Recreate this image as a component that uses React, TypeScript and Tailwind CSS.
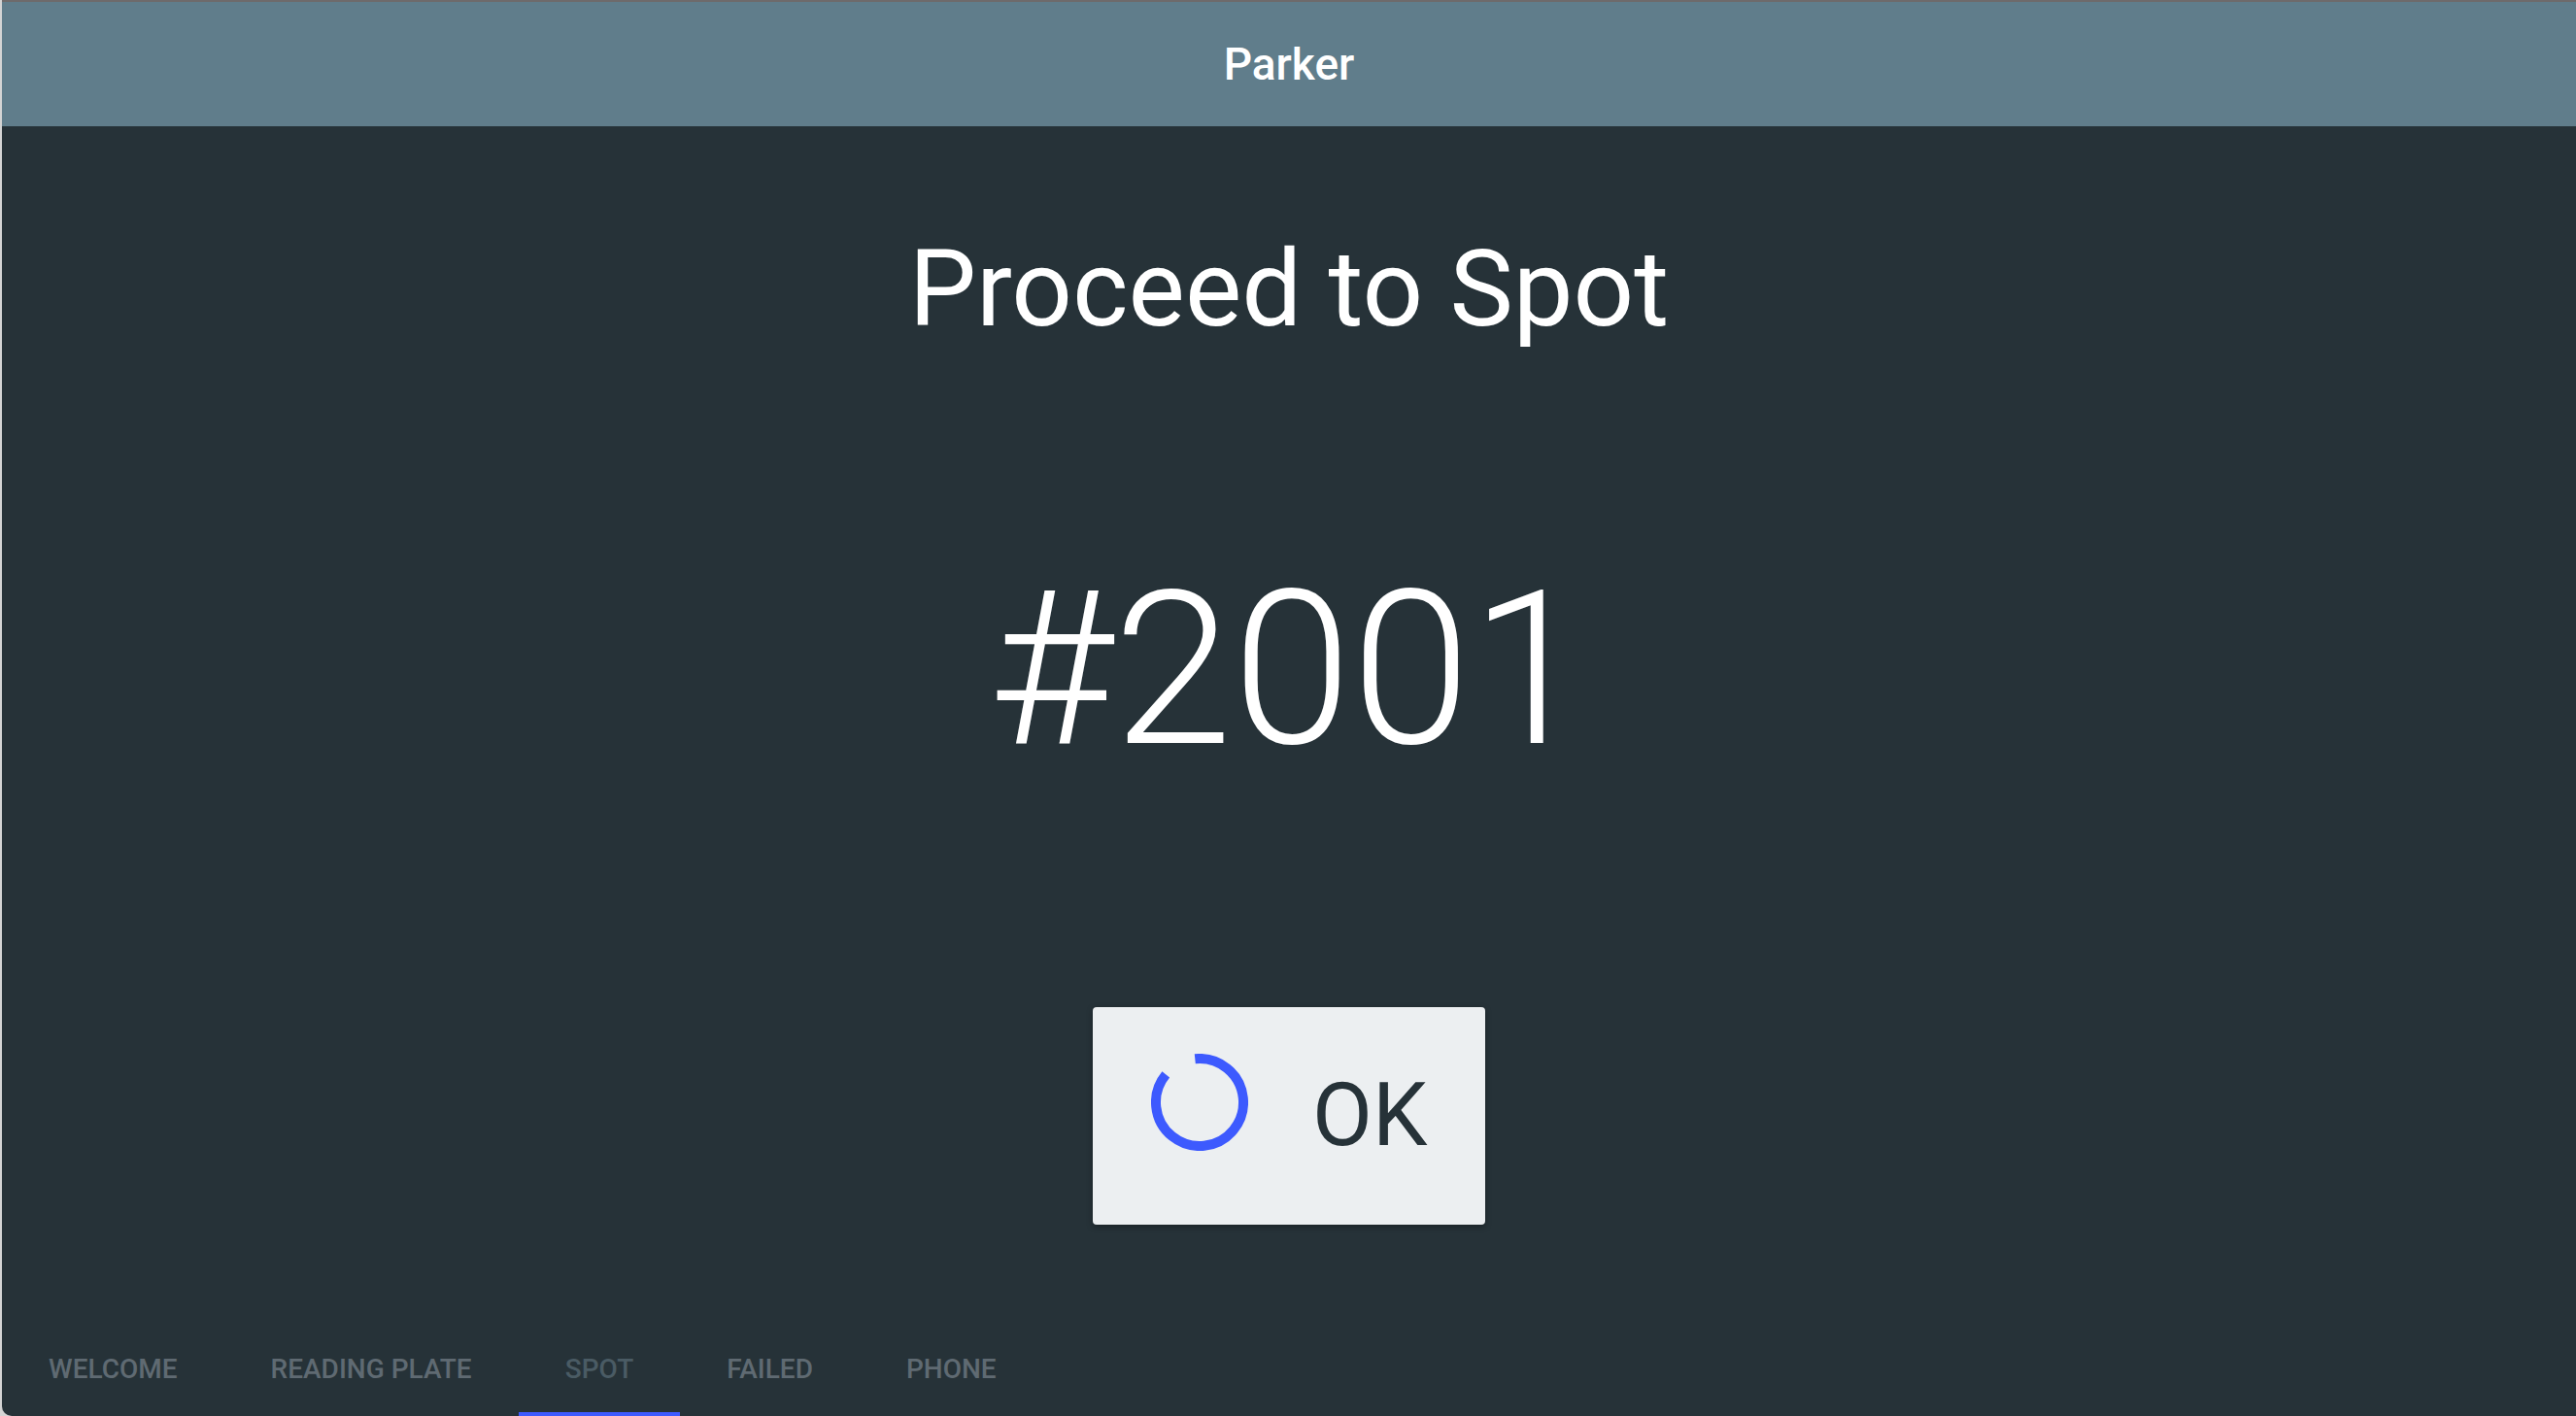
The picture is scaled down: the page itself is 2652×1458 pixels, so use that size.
const tabs = ["Welcome", "Reading Plate", "Spot", "Failed", "Phone"];

const Spinner = () => (
  <svg width="100" height="100" viewBox="0 0 100 100" className="mb-[28px] shrink-0">
    <circle
      cx="50"
      cy="50"
      r="45"
      fill="none"
      stroke="#3d5afe"
      strokeWidth="10"
      strokeDasharray="247.4 282.7"
      transform="rotate(-96 50 50)"
    />
  </svg>
);

export default function App() {
  const active = 2;
  return (
    <div className="w-[2652px] h-[1458px] bg-[#d4d4d4] flex font-['Roboto',sans-serif]">
      <div className="ml-[2px] flex-1 flex flex-col bg-[#263238] rounded-bl-[10px] overflow-hidden">
        <header className="h-[130px] shrink-0 bg-[#607d8b] border-t-2 border-[#6e6a6b] flex items-center justify-center">
          <span className="text-white text-[46px] leading-none font-medium">Parker</span>
        </header>

        <main className="flex-1 flex flex-col items-center">
          <h1 className="mt-[113px] text-white text-[110px] leading-none font-normal">
            Proceed to Spot
          </h1>
          <div className="mt-[226px] text-white text-[221px] leading-none font-light">#2001</div>
          <button className="mt-[237px] w-[404px] h-[224px] rounded-[4px] bg-[#eceff1] shadow-[0_2px_6px_rgba(0,0,0,0.35)] flex items-center pl-[60px]">
            <Spinner />
            <span className="ml-[66px] text-[#263238] text-[90px] leading-none font-normal">OK</span>
          </button>
        </main>

        <nav className="h-[96px] shrink-0 flex">
          {tabs.map((t, i) => (
            <div key={t} className="relative h-full px-12 flex items-center">
              <span
                className={
                  i === active
                    ? "uppercase text-[28px] font-medium text-[#4a5b64]"
                    : "uppercase text-[28px] font-medium text-[#5f6a72]"
                }
              >
                {t}
              </span>
              {i === active && <div className="absolute left-0 right-0 bottom-0 h-[4px] bg-[#3d5afe]" />}
            </div>
          ))}
        </nav>
      </div>
    </div>
  );
}
